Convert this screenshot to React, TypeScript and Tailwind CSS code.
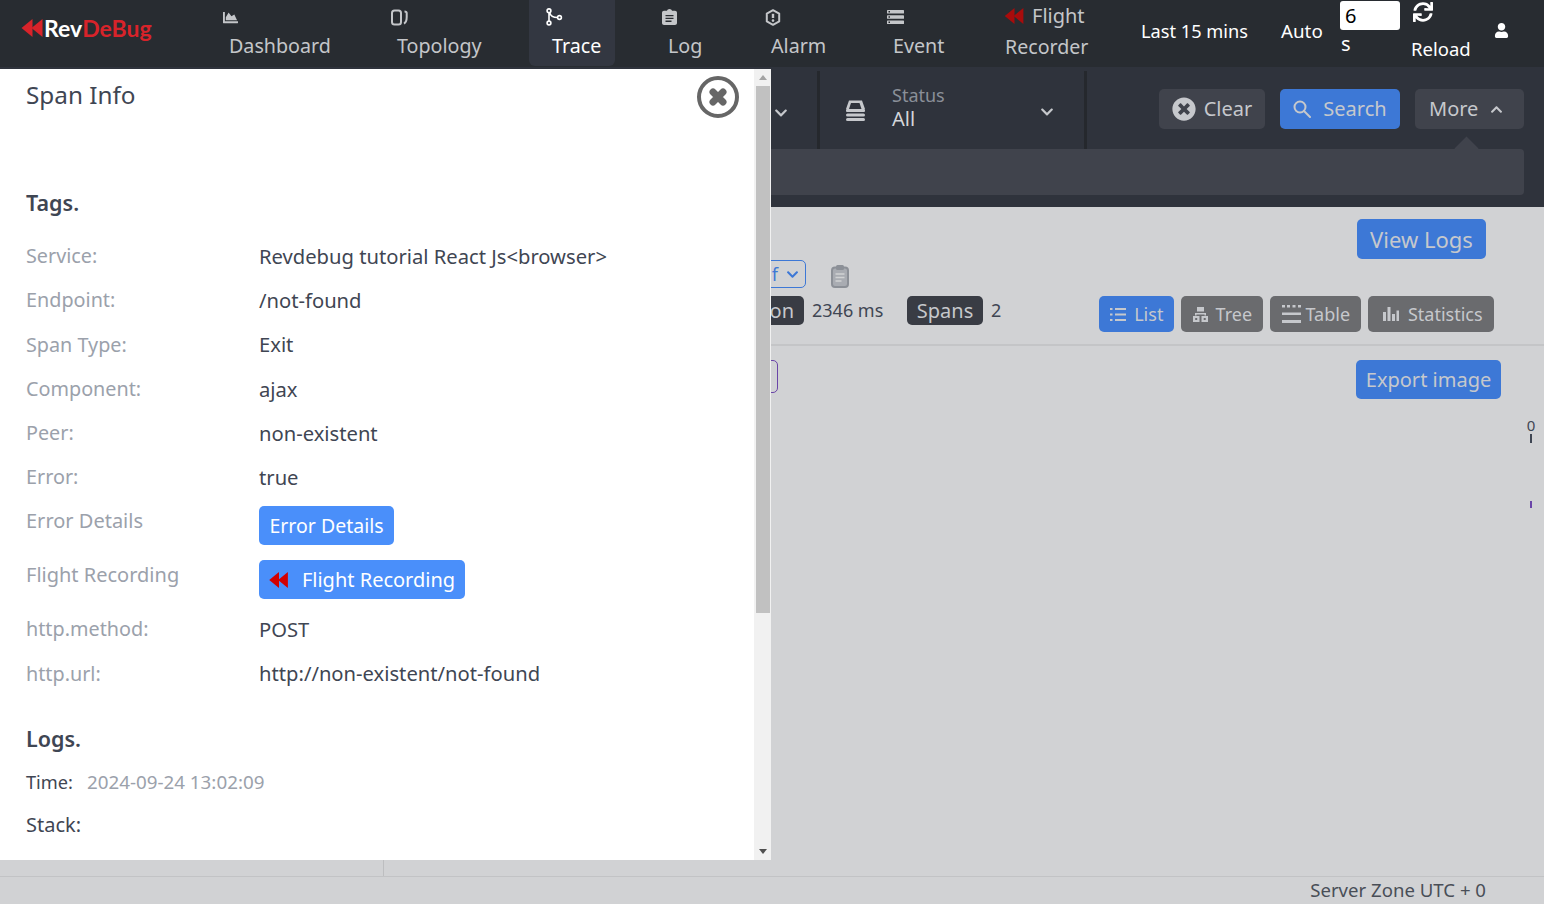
import React from 'react';
import { FaChartArea, FaSync, FaUser, FaTimesCircle, FaChevronDown, FaChevronUp } from 'react-icons/fa';

type NavProps = { label: string; icon: React.ReactNode; width: string; active?: boolean };

function Rewind({ className }: { className?: string }) {
  return (
    <svg viewBox="0 0 22 18" className={className} fill="currentColor">
      <polygon points="0,9 11,0 11,18" />
      <polygon points="10,9 21,0 21,18" />
    </svg>
  );
}

function TopologyIcon() {
  return (
    <svg viewBox="0 0 17 17" className="h-[17px] w-[17px]" fill="none" stroke="currentColor" strokeWidth="2">
      <rect x="1" y="1.5" width="9" height="14" rx="2.5" />
      <path d="M13.5 2.5c1.500 0 2.200.6 2.200 1.600v4c0 3-.8 5.500-2.700 6.500" />
    </svg>
  );
}

function TraceIcon() {
  return (
    <svg viewBox="0 0 17 18" className="h-[18px] w-[17px]" fill="none" stroke="currentColor" strokeWidth="1.600">
      <circle cx="3" cy="2.800" r="1.900" />
      <circle cx="3" cy="15" r="1.900" />
      <circle cx="13.500" cy="9.500" r="1.900" />
      <path d="M3 4.700v8.400M3.800 5c.6 2.500 3 4.500 7.800 4.500" />
    </svg>
  );
}

function LogIcon() {
  return (
    <svg viewBox="0 0 15 16" className="h-[16px] w-[15px]" fill="currentColor">
      <path d="M2 1.800h3C5.300.7 6.300 0 7.500 0s2.200.7 2.500 1.800h3c1.100 0 2 .9 2 2V14c0 1.100-.9 2-2 2H2c-1.100 0-2-.9-2-2V3.800c0-1.100.9-2 2-2z" />
      <path d="M3.500 6h8v1.300h-8zM3.500 8.800h8v1.300h-8zM3.500 11.600h6v1.300h-6z" fill="#282c31" />
    </svg>
  );
}

function AlarmIcon() {
  return (
    <svg viewBox="0 0 16 17" className="h-[17px] w-[16px]" fill="none" stroke="currentColor" strokeWidth="2">
      <path d="M8 1.200l6.200 3.400v7.800L8 15.800l-6.200-3.400V4.600z" strokeLinejoin="round" />
      <path d="M8 4.800v4.200" strokeWidth="2.400" />
      <circle cx="8" cy="11.600" r="1.300" fill="currentColor" stroke="none" />
    </svg>
  );
}

function EventIcon() {
  return (
    <svg viewBox="0 0 17 14" className="h-[14px] w-[17px]" fill="currentColor">
      <rect y="0" width="17" height="3.600" rx="0.600" />
      <rect y="5.200" width="17" height="3.600" rx="0.600" />
      <rect y="10.400" width="17" height="3.600" rx="0.600" />
      <path d="M1.500 1h1.500v1.500H1.500zM1.500 6.200h1.500v1.500H1.500zM1.500 11.400h1.500v1.500H1.500z" fill="#282c31" />
    </svg>
  );
}

function StatusIcon() {
  return (
    <svg viewBox="0 0 21 21" className="h-[21px] w-[21px]" fill="currentColor">
      <path d="M4 0.500h13l3 8.500h-3.500l-2-6H6l-2 6H1z" />
      <rect x="1" y="9" width="19" height="3" rx="1" />
      <rect x="1" y="13.500" width="19" height="3" rx="1.500" />
      <rect x="1" y="18" width="19" height="3" rx="1.500" />
    </svg>
  );
}

function NavItem({ label, icon, width, active }: NavProps) {
  return (
    <div className={`${width} flex h-[66px] flex-col rounded-b-md ${active ? 'bg-[#333741] text-white' : 'text-[#c4c6c9]'}`}>
      <div className="flex h-[34px] items-center pl-[17px]">{icon}</div>
      <div className="pl-[23px] text-[19.700px] leading-[24px]">{label}</div>
    </div>
  );
}

function Row({ label, value }: { label: string; value: string }) {
  return (
    <div className="flex h-[44.200px] items-center">
      <div className="w-[233px] text-[19.800px] text-[#9ba1ab]">{label}</div>
      <div className="text-[20.200px]">{value}</div>
    </div>
  );
}

function GreyButton({ icon, label, width }: { icon: React.ReactNode; label: string; width: string }) {
  return (
    <div className={`${width} flex h-[36px] items-center justify-center gap-[8px] rounded-[5px] bg-[#6a6b6e] text-[#c6c8cc]`}>
      {icon}
      <span>{label}</span>
    </div>
  );
}

export default function App() {
  return (
    <div className="relative flex h-[904px] w-[1544px] flex-col overflow-hidden bg-[#d1d2d4] font-['Noto_Sans',sans-serif] text-[20px] text-[#3f4653]">
      {/* top bar */}
      <header className="flex h-[67px] items-start bg-[#282c31]">
        <div className="flex w-[206px] items-center pl-[21px] pt-[14px]">
          <Rewind className="h-[18px] w-[23px] text-[#d8232a]" />
          <span className="font-['Lato',sans-serif] text-[23px] leading-[28px] font-bold text-white">Rev</span>
          <span className="font-['Lato',sans-serif] text-[23px] leading-[28px] font-bold text-[#d8232a]">DeBug</span>
        </div>
        <NavItem width="w-[168px]" label="Dashboard" icon={<FaChartArea className="h-[15px] w-[15px]" />} />
        <NavItem width="w-[155px]" label="Topology" icon={<TopologyIcon />} />
        <NavItem width="w-[86px]" active label="Trace" icon={<TraceIcon />} />
        <div className="w-[30px]" />
        <NavItem width="w-[103px]" label="Log" icon={<LogIcon />} />
        <NavItem width="w-[122px]" label="Alarm" icon={<AlarmIcon />} />
        <NavItem width="w-[134px]" label="Event" icon={<EventIcon />} />
        <div className="flex w-[137px] flex-col text-[#c4c6c9]">
          <div className="flex h-[32px] items-center gap-[7px]">
            <Rewind className="h-[16px] w-[21px] text-[#a80c0c]" />
            <span>Flight</span>
          </div>
          <div className="pt-[3px] pl-[1px] text-[19.600px] leading-[24px]">Recorder</div>
        </div>
        <div className="w-[140px] pt-[18px] text-[18.200px] leading-[26px] text-white">Last 15 mins</div>
        <div className="w-[59px] pt-[18px] text-[18.800px] leading-[26px] text-white">Auto</div>
        <div className="w-[71px] pt-[1px] text-white">
          <div className="h-[29px] w-[60px] rounded-[3px] bg-white pl-[5px] leading-[29px] text-black">6</div>
          <div className="pl-[1px] leading-[28px]">s</div>
        </div>
        <div className="w-[83px] text-white">
          <FaSync className="mt-[2px] ml-[2px] h-[20px] w-[20px]" />
          <div className="pt-[15px] text-[18.500px] leading-[24px]">Reload</div>
        </div>
        <FaUser className="mt-[23px] h-[15px] w-[15px] text-white" />
      </header>

      {/* filter band */}
      <section className="flex h-[140px] flex-col bg-[#2f333c]">
        <div className="flex h-[82px]">
          <div className="flex w-[817px] justify-end pt-[38px] pr-[29px]">
            <FaChevronDown className="mt-[1px] h-[14px] w-[14px] text-[#c6c8cc]" />
          </div>
          <div className="mt-[4px] flex w-[270px] border-x-[3px] border-[#25282d]">
            <div className="pt-[29px] pl-[25px] text-[#c6c8cc]"><StatusIcon /></div>
            <div className="w-[174px] pl-[26px] pt-[12px]">
              <div className="text-[18px] leading-[24px] text-[#8a8f98]">Status</div>
              <div className="leading-[24px] text-[#d4d6da]">All</div>
            </div>
            <FaChevronDown className="mt-[34px] h-[14px] w-[14px] text-[#c6c8cc]" />
          </div>
          <div className="flex flex-1 items-start justify-end gap-[15px] pt-[22px] pr-[20px]">
            <div className="flex h-[40px] w-[106px] items-center justify-center gap-[8px] rounded-[5px] bg-[#40434c] text-[#c6c8cc]">
              <FaTimesCircle className="h-[24px] w-[24px]" />
              <span>Clear</span>
            </div>
            <div className="flex h-[40px] w-[120px] items-center justify-center gap-[12px] rounded-[5px] bg-[#3d78d6] text-[#c6c8cc]">
              <svg viewBox="0 0 18 18" className="h-[18px] w-[18px]" fill="none" stroke="currentColor" strokeWidth="2">
                <circle cx="7" cy="7" r="5.500" />
                <path d="M11 11l6 6" strokeLinecap="round" />
              </svg>
              <span>Search</span>
            </div>
            <div className="relative flex h-[40px] w-[109px] items-center gap-[12px] rounded-[5px] bg-[#40434c] pl-[14px] text-[#c6c8cc]">
              <span>More</span>
              <FaChevronUp className="h-[13px] w-[13px]" />
              <div className="absolute top-[51px] left-[43px] h-[17px] w-[17px] rotate-45 bg-[#40434c]" />
            </div>
          </div>
        </div>
        <div className="relative mr-[20px] h-[46px] rounded-r-[4px] bg-[#40434c]" />
      </section>

      {/* trace content behind the drawer */}
      <main className="flex flex-1 flex-col">
        <div className="flex h-[52px] items-end justify-end pr-[58px]">
          <div className="flex h-[40px] w-[129px] items-center justify-center rounded-[5px] bg-[#3d78d6] text-[22px] text-[#c6c8cc]">View Logs</div>
        </div>
        <div className="flex h-[29px] items-end pl-[700px]">
          <div className="flex h-[28px] w-[106px] items-center justify-end gap-[7px] rounded-[5px] border border-[#3d78d6] pr-[5px] text-[18px] text-[#3d78d6]">
            <span>f</span>
            <FaChevronDown className="h-[13px] w-[15px]" />
          </div>
          <svg viewBox="0 0 18 23" className="ml-[25px] h-[23px] w-[18px]" fill="none">
            <rect x="1" y="2.500" width="16" height="19.500" rx="3" stroke="#8c9097" strokeWidth="2" fill="#a9acb2" />
            <rect x="5" y="0" width="8" height="5" rx="1.500" fill="#8c9097" />
            <path d="M4.500 9h9M4.500 12.500h9M4.500 16h6" stroke="#d1d2d4" strokeWidth="1.500" />
          </svg>
        </div>
        <div className="flex h-[56px] items-start pt-[8px] pl-[700px]">
          <div className="flex h-[29px] w-[104px] items-center justify-end rounded-[5px] bg-[#393c44] pr-[10px] text-[#c6c8cc]">Duration</div>
          <div className="w-[103px] pl-[8px] text-[18px] leading-[29px]">2346 ms</div>
          <div className="flex h-[29px] w-[76px] items-center justify-center rounded-[5px] bg-[#393c44] text-[#c6c8cc]">Spans</div>
          <div className="pl-[8px] text-[18px] leading-[29px]">2</div>
          <div className="ml-[98px] flex gap-[7px] text-[18px]">
            <div className="flex h-[36px] w-[75px] items-center justify-center gap-[8px] rounded-[5px] bg-[#3d78d6] text-[#c6c8cc]">
              <svg viewBox="0 0 16 15" className="h-[15px] w-[16px]" fill="currentColor">
                <path d="M0 1h2.500v2H0zM5 1h11v2H5zM0 6.500h2.500v2H0zM5 6.500h11v2H5zM0 12h2.500v2H0zM5 12h11v2H5z" />
              </svg>
              <span>List</span>
            </div>
            <GreyButton
              width="w-[82px]"
              label="Tree"
              icon={
                <svg viewBox="0 0 15 15" className="h-[15px] w-[15px]" fill="currentColor">
                  <path d="M4 0h7v4.500H4zM2 6h11v2.500h-1.500V7.500h-8v1H2z" />
                  <path fillRule="evenodd" d="M0 9h6.500v6H0zM2.200 11v2h2v-2zM8.500 9H15v6H8.500zM10.700 11v2h2v-2z" />
                </svg>
              }
            />
            <div className="flex h-[36px] w-[91px] items-center justify-center gap-[5px] rounded-[5px] bg-[#6a6b6e] text-[#c6c8cc]">
              <svg viewBox="0 0 19 18" className="h-[18px] w-[19px]" fill="currentColor">
                <path d="M0 0h3v2.500H0zM5 0h3v2.500H5zM10.500 0h3v2.500h-3zM16 0h3v2.500h-3zM0 7.500h19v2.500H0zM0 15h19v3H0z" />
              </svg>
              <span>Table</span>
            </div>
            <div className="flex h-[36px] w-[126px] items-center justify-center gap-[9px] rounded-[5px] bg-[#6a6b6e] pl-[3px] text-[#c6c8cc]">
              <svg viewBox="0 0 16 14" className="h-[14px] w-[16px]" fill="currentColor">
                <path d="M0 5h3v9H0zM4.500 0h3v14h-3zM9 7h3v7H9zM13.500 3.500H16V14h-2.500z" />
              </svg>
              <span>Statistics</span>
            </div>
          </div>
        </div>
        <div className="h-[2px] bg-[#c4c5c7]" />
        <div className="flex h-[53px] items-end justify-between pr-[43px]">
          <div className="ml-[700px] mt-[14px] h-[33px] w-[78px] self-start rounded-[5px] border border-[#6a45a8]" />
          <div className="flex h-[39px] w-[145px] items-center justify-center rounded-[5px] bg-[#3d78d6] text-[#c6c8cc]">Export image</div>
        </div>
        <div className="flex flex-1 flex-col items-end pr-[8px] pt-[17px]">
          <div className="flex w-[10px] flex-col items-center">
            <div className="text-[15px] leading-[18px]">0</div>
            <div className="h-[9px] w-[2px] bg-[#3f4653]" />
            <div className="mt-[58px] h-[7px] w-[2px] bg-[#6a45a8]" />
          </div>
        </div>
        <div className="h-[16px]">
          <div className="ml-[383px] h-full w-[1px] bg-[#bdbec0]" />
        </div>
      </main>

      {/* footer */}
      <footer className="flex h-[28px] items-center justify-end border-t border-[#c2c3c5] pr-[58px] pb-[2px] text-[18.600px] text-[#494e57]">
        Server Zone UTC + 0
      </footer>

      {/* span info drawer */}
      <div className="absolute top-[69px] left-0 flex h-[791px] w-[771px] bg-white">
        <div className="relative flex-1 overflow-hidden pl-[26px]">
          <div className="pt-[8px] text-[24.300px] leading-[36px]">Span Info</div>
          <svg viewBox="0 0 44 44" className="absolute top-[6px] left-[696px] h-[44px] w-[44px]" fill="none" stroke="#666">
            <circle cx="22" cy="22" r="19" strokeWidth="4" />
            <path d="M17 17l10 10M27 17L17 27" strokeWidth="7" strokeLinecap="round" />
          </svg>

          <div className="pt-[75px] text-[21.500px] leading-[30px] font-semibold">Tags.</div>
          <div className="pt-[16px]">
            <Row label="Service:" value="Revdebug tutorial React Js<browser>" />
            <Row label="Endpoint:" value="/not-found" />
            <Row label="Span Type:" value="Exit" />
            <Row label="Component:" value="ajax" />
            <Row label="Peer:" value="non-existent" />
            <Row label="Error:" value="true" />
            <div className="flex h-[54px] items-start pt-[7px]">
              <div className="w-[233px] text-[#9ba1ab]">Error Details</div>
              <div className="flex h-[39px] w-[135px] items-center justify-center rounded-[5px] bg-[#4a8ffa] text-[19.500px] text-white">Error Details</div>
            </div>
            <div className="flex h-[54px] items-start pt-[7px]">
              <div className="w-[233px] text-[#9ba1ab]">Flight Recording</div>
              <div className="flex h-[39px] w-[206px] items-center justify-center gap-[13px] rounded-[5px] bg-[#4a8ffa] text-white">
                <Rewind className="h-[16px] w-[20px] text-[#d30000]" />
                <span>Flight Recording</span>
              </div>
            </div>
            <Row label="http.method:" value="POST" />
            <Row label="http.url:" value="http://non-existent/not-found" />
          </div>
          <div className="pt-[28px] text-[21.500px] leading-[30px] font-semibold">Logs.</div>
          <div className="flex items-baseline gap-[14px] pt-[14px] leading-[28px]">
            <span className="text-[18.200px]">Time:</span>
            <span className="text-[18.800px] text-[#9ba1ab]">2024-09-24 13:02:09</span>
          </div>
          <div className="pt-[15px] leading-[28px]">Stack:</div>
        </div>

        {/* scrollbar */}
        <div className="flex w-[17px] flex-col items-center bg-[#f1f1f1]">
          <div className="flex h-[17px] items-center justify-center">
            <div className="h-0 w-0 border-x-[4px] border-b-[5px] border-x-transparent border-b-[#a3a3a3]" />
          </div>
          <div className="h-[527px] w-[14px] bg-[#c1c1c1]" />
          <div className="mt-auto flex h-[17px] items-center justify-center">
            <div className="h-0 w-0 border-x-[4px] border-t-[5px] border-x-transparent border-t-[#505050]" />
          </div>
        </div>
      </div>
    </div>
  );
}
